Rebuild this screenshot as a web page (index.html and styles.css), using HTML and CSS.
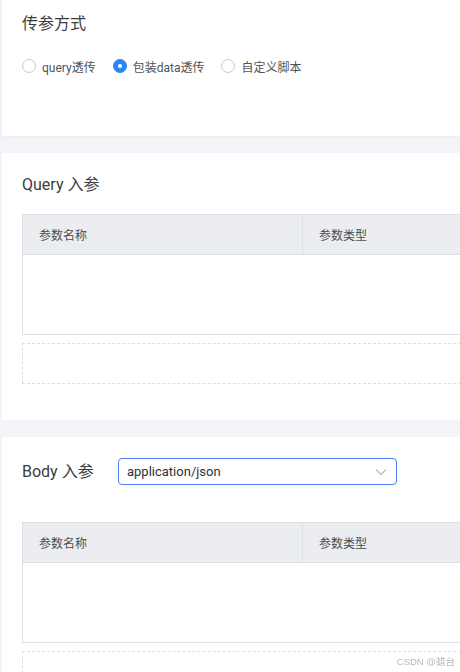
FILE: index.html
```html
<!DOCTYPE html>
<html lang="zh">
<head>
<meta charset="utf-8">
<link rel="stylesheet" href="styles.css">
</head>
<body>
<div class="page">
  <section class="card card-mode">
    <h2 class="title">传参方式</h2>
    <div class="radios">
      <label class="radio"><span class="dot"></span><span class="rlabel">query透传</span></label>
      <label class="radio checked"><span class="dot"></span><span class="rlabel">包装data透传</span></label>
      <label class="radio"><span class="dot"></span><span class="rlabel">自定义脚本</span></label>
    </div>
  </section>

  <section class="card card-query">
    <h2 class="title">Query 入参</h2>
    <div class="table">
      <div class="thead">
        <div class="th th-name">参数名称</div>
        <div class="th th-type">参数类型</div>
      </div>
      <div class="tbody"></div>
    </div>
    <div class="dashed"></div>
  </section>

  <section class="card card-body">
    <div class="body-head">
      <h2 class="title">Body 入参</h2>
      <div class="select">
        <span class="sel-text">application/json</span>
        <svg class="chev" width="12" height="8" viewBox="0 0 12 8"><path d="M1 1.5 L6 6.5 L11 1.5" fill="none" stroke="#b4b8bf" stroke-width="1.1"/></svg>
      </div>
    </div>
    <div class="table table-body">
      <div class="thead">
        <div class="th th-name">参数名称</div>
        <div class="th th-type">参数类型</div>
      </div>
      <div class="tbody"></div>
    </div>
    <div class="dashed"></div>
  </section>
</div>
<div class="watermark">CSDN @蜡台</div>
</body>
</html>
```

FILE: styles.css
```css
html, body {
  margin: 0;
  padding: 0;
  background: #f2f4f7;
  overflow: hidden;
  height: 672px;
  width: 460px;
  font-family: Roboto, "Noto Sans CJK SC", sans-serif;
  color: #303133;
}
.page {
  padding-left: 2px;
  width: 700px;
}
.card {
  background: #fff;
  box-sizing: border-box;
  padding-left: 20px;
  margin-bottom: 17px;
}
.title {
  margin: 0;
  font-size: 16px;
  font-weight: 400;
  line-height: 20px;
  color: #3a3c40;
}
.card-mode {
  height: 136px;
  padding-top: 14px;
  box-shadow: 0 1px 2px rgba(0,0,0,0.03);
}
.radios {
  display: flex;
  align-items: center;
  margin-top: 23px;
  height: 18px;
}
.radio {
  display: flex;
  align-items: center;
  margin-right: 17px;
  font-size: 12px;
  color: #505359;
}
.dot {
  width: 14px;
  height: 14px;
  box-sizing: border-box;
  border: 1px solid #c6cad1;
  border-radius: 50%;
  background: #fff;
  margin-right: 6px;
  position: relative;
}
.radio.checked .dot {
  background: #2d84f7;
  border-color: #2d84f7;
}
.radio.checked .dot::after {
  content: "";
  position: absolute;
  left: 4px;
  top: 4px;
  width: 4px;
  height: 4px;
  border-radius: 50%;
  background: #fff;
}
.card-query {
  height: 267px;
  padding-top: 22px;
}
.table {
  margin-top: 19px;
  border: 1px solid #dcdfe4;
  border-right: none;
}
.thead {
  display: flex;
  height: 39px;
  background: #ebedf0;
  border-bottom: 1px solid #dcdfe4;
}
.th {
  display: flex;
  align-items: center;
  font-size: 12px;
  color: #4a4d52;
  box-sizing: border-box;
  padding-left: 16px;
}
.th-name {
  width: 280px;
  border-right: 1px solid #dcdfe4;
}
.th-type {
  flex: 1;
}
.tbody {
  height: 79px;
}
.dashed {
  margin-top: 8px;
  height: 39px;
  border: 1px dashed #dcdfe4;
  border-right: none;
}
.card-body {
  height: 260px;
  padding-top: 21px;
  margin-bottom: 0;
}
.body-head {
  display: flex;
  align-items: center;
  height: 27px;
}
.body-head .title {
  width: 96px;
}
.select {
  width: 279px;
  height: 27px;
  box-sizing: border-box;
  border: 1px solid #4d80f0;
  border-radius: 4px;
  display: flex;
  align-items: center;
  justify-content: space-between;
  padding: 0 9px 0 8px;
  font-size: 13px;
  color: #303133;
}
.chev {
  display: block;
}
.table-body {
  margin-top: 37px;
}
.watermark {
  position: fixed;
  right: 5px;
  bottom: 4px;
  font-size: 9.5px;
  color: #b8b8b8;
  font-family: "Liberation Sans", "Noto Sans CJK SC", sans-serif;
}
```
